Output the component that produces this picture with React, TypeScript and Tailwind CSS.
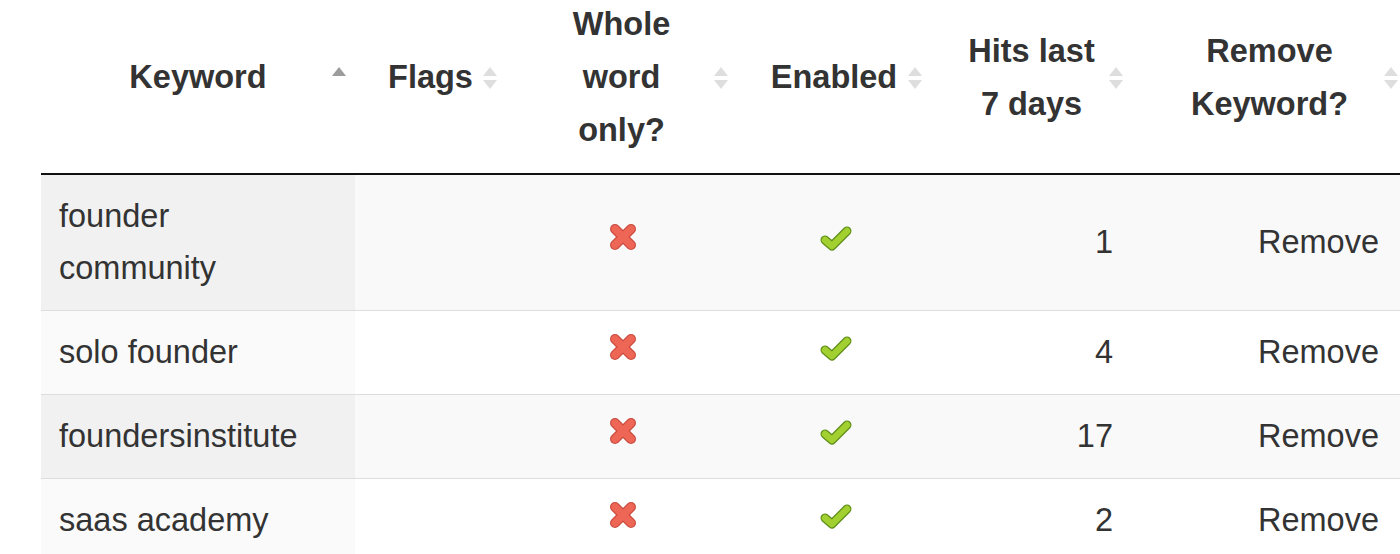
import React from "react";

const SortIcon = ({ sorted }: { sorted?: boolean }) => (
  <svg width="16" height="28" viewBox="0 0 16 28" className="absolute right-[8px] top-1/2 -translate-y-1/2">
    {sorted ? (
      <polygon points="1,12 8,3 15,12" fill="#9c9c9c" />
    ) : (
      <>
        <polygon points="1,12 8,3 15,12" fill="#dedede" />
        <polygon points="1,16 8,25 15,16" fill="#dedede" />
      </>
    )}
  </svg>
);

const Cross = () => (
  <svg width="28" height="28" viewBox="0 0 28 28" className="block mx-auto -translate-y-[5px] translate-x-[1px]">
    <g strokeLinecap="round">
      <line x1="6" y1="6" x2="22" y2="22" stroke="#c94a3d" strokeWidth="10" />
      <line x1="22" y1="6" x2="6" y2="22" stroke="#c94a3d" strokeWidth="10" />
      <line x1="6" y1="6" x2="22" y2="22" stroke="#ee6656" strokeWidth="7.5" />
      <line x1="22" y1="6" x2="6" y2="22" stroke="#ee6656" strokeWidth="7.5" />
    </g>
  </svg>
);

const Check = () => (
  <svg width="32" height="28" viewBox="0 0 32 28" className="block mx-auto -translate-y-[4px] translate-x-[2px]">
    <polyline points="5,16 12,22 27,7" fill="none" stroke="#5f8f1a" strokeWidth="9" strokeLinecap="round" strokeLinejoin="round" />
    <polyline points="5,16 12,22 27,7" fill="none" stroke="#a2d030" strokeWidth="6.5" strokeLinecap="round" strokeLinejoin="round" />
  </svg>
);

const rows: { kw: React.ReactNode; hits: number }[] = [
  { kw: <>founder<br />community</>, hits: 1 },
  { kw: "solo founder", hits: 4 },
  { kw: "foundersinstitute", hits: 17 },
  { kw: "saas academy", hits: 2 },
];

export default function App() {
  return (
    <div
      className="w-[1400px] h-[554px] overflow-hidden bg-white text-[#333]"
      style={{ fontFamily: '"Liberation Sans", Arial, Helvetica, sans-serif' }}
    >
      <table className="ml-[41px] -mt-[18px] w-[1366px] table-fixed border-collapse text-[32.5px] leading-[53px]">
        <colgroup>
          <col className="w-[314px]" />
          <col className="w-[151px]" />
          <col className="w-[231px]" />
          <col className="w-[194px]" />
          <col className="w-[201px]" />
          <col className="w-[275px]" />
        </colgroup>
        <thead>
          <tr className="border-b-2 border-[#111]">
            <th className="relative py-4 px-[30px] text-center font-bold align-middle whitespace-nowrap">
              Keyword
              <SortIcon sorted />
            </th>
            <th className="relative py-4 px-[26px] text-center font-bold align-middle whitespace-nowrap">
              Flags
              <SortIcon />
            </th>
            <th className="relative py-4 px-[26px] text-center font-bold align-middle whitespace-nowrap">
              Whole<br />word<br />only?
              <SortIcon />
            </th>
            <th className="relative py-4 px-[26px] text-center font-bold align-middle whitespace-nowrap">
              Enabled
              <SortIcon />
            </th>
            <th className="relative py-4 px-[26px] text-center font-bold align-middle whitespace-nowrap">
              Hits last<br />7 days
              <SortIcon />
            </th>
            <th className="relative py-4 px-[26px] text-center font-bold align-middle whitespace-nowrap">
              Remove<br />Keyword?
              <SortIcon />
            </th>
          </tr>
        </thead>
        <tbody className="leading-[52px]">
          {rows.map((r, i) => {
            const odd = i % 2 === 0;
            const rest = odd ? "bg-[#f9f9f9]" : "bg-white";
            return (
              <tr key={i} className={i > 0 ? "border-t border-[#dddddd]" : ""}>
                <td className={`pl-[18px] pr-4 pt-[15px] pb-[16px] align-middle whitespace-nowrap ${odd ? "bg-[#f1f1f1]" : "bg-[#fafafa]"}`}>
                  {r.kw}
                </td>
                <td className={`pt-[15px] pb-[16px] ${rest}`}></td>
                <td className={`pt-[15px] pb-[16px] align-middle ${rest}`}>
                  <Cross />
                </td>
                <td className={`pt-[15px] pb-[16px] align-middle ${rest}`}>
                  <Check />
                </td>
                <td className={`pt-[15px] pb-[16px] pr-[19px] text-right align-middle ${rest}`}>
                  {r.hits}
                </td>
                <td className={`pt-[15px] pb-[16px] pr-[28px] text-right align-middle ${rest}`}>
                  Remove
                </td>
              </tr>
            );
          })}
        </tbody>
      </table>
    </div>
  );
}
